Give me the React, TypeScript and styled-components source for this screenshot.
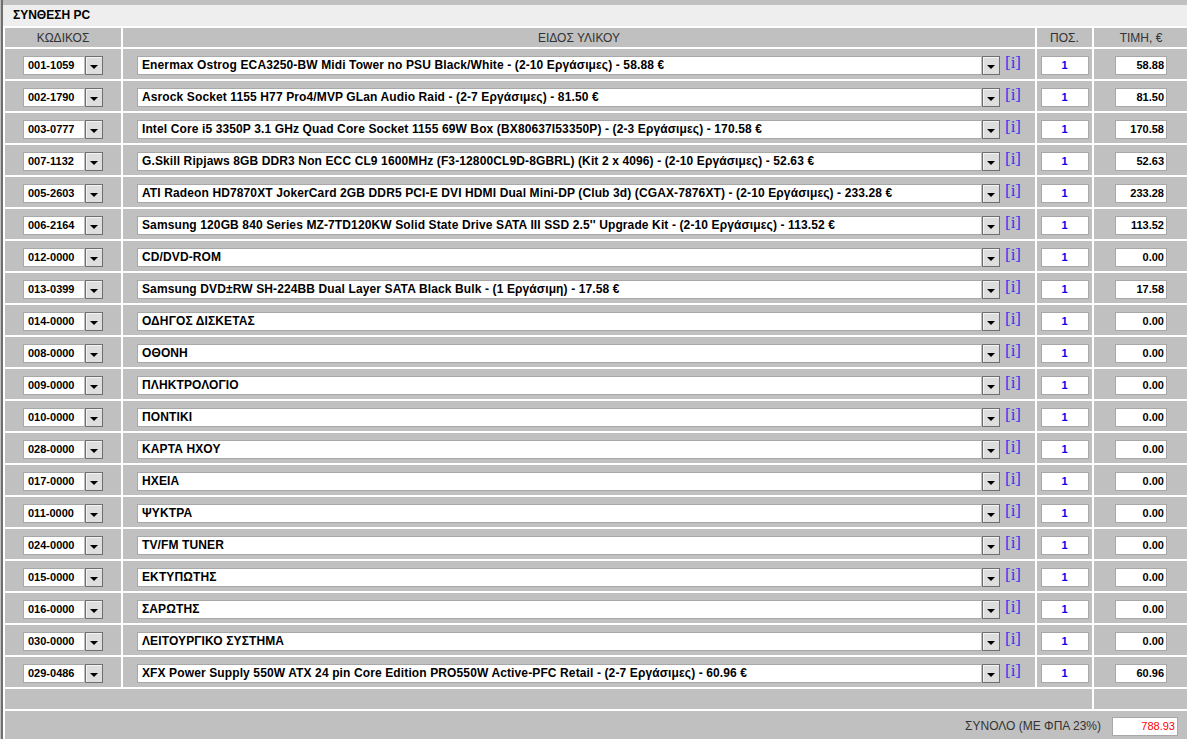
import React from "react";
import styled, { createGlobalStyle } from "styled-components";

const GlobalStyle = createGlobalStyle`
  html, body {
    margin: 0;
    padding: 0;
    background: #c0c0c0;
    overflow: hidden;
  }
  body {
    font-family: "Liberation Sans", Arial, sans-serif;
    font-size: 11px;
    color: #000;
  }
`;

const Page = styled.div`
  margin-left: 1px;
  border-left: 2px solid #6e6e6e;
  padding-top: 5px;
  width: 1184px;
  height: 734px;
  overflow: hidden;
`;

const TitleBar = styled.div`
  height: 21px;
  line-height: 21px;
  background: #eeeeee;
  padding-left: 10px;
  font-size: 12px;
  font-weight: bold;
`;

const Grid = styled.table`
  border-collapse: separate;
  border-spacing: 2px;
  background: #fff;
  table-layout: fixed;
  width: 1187px;
`;

const HeadCell = styled.th`
  background: #c0c0c0;
  height: 19px;
  padding: 0;
  font-size: 12px;
  font-weight: normal;
  color: #333;
  text-align: center;
  vertical-align: middle;
`;

const Cell = styled.td<{ $h?: number }>`
  background: #c0c0c0;
  height: ${(p) => p.$h ?? 30}px;
  padding: 7px 0 0;
  box-sizing: border-box;
  text-align: center;
  vertical-align: top;
  white-space: nowrap;
`;

const FooterCell = styled.td`
  background: #c0c0c0;
  height: 30px;
  padding: 6px 10px 0 0;
  box-sizing: border-box;
  text-align: right;
  vertical-align: top;
`;

const Combo = styled.div<{ $w: number }>`
  display: inline-flex;
  align-items: center;
  gap: 1px;
  width: ${(p) => p.$w}px;
  height: 19px;
  vertical-align: top;
  text-align: left;
`;

const ComboField = styled.span<{ $size: number }>`
  flex: 1;
  height: 19px;
  line-height: 17px;
  box-sizing: border-box;
  background: #fff;
  border: 1px solid #a8a8a8;
  border-right: none;
  padding-left: 4px;
  font-size: ${(p) => p.$size}px;
  letter-spacing: ${(p) => (p.$size > 11 ? "0.12px" : "0")};
  font-weight: bold;
  overflow: hidden;
  white-space: nowrap;
`;

const ComboButton = styled.span`
  width: 18px;
  height: 19px;
  box-sizing: border-box;
  border: 1px solid #6f6f6f;
  box-shadow: inset 1px 1px 0 #f4f4f4;
  background: #dedede;
  display: flex;
  align-items: center;
  justify-content: center;
  padding-top: 2px;

  &::after {
    content: "";
    border-left: 4px solid transparent;
    border-right: 4px solid transparent;
    border-top: 4px solid #000;
  }
`;

const InfoLink = styled.a`
  display: inline-block;
  margin-left: 5px;
  font-family: "Liberation Serif", "Times New Roman", serif;
  font-size: 17px;
  line-height: 15px;
  color: #3434f0;
  text-decoration: none;
  vertical-align: top;
  margin-top: -1px;
`;

const Field = styled.span<{ $w: number; $align: string; $color: string; $bold?: boolean }>`
  display: inline-block;
  width: ${(p) => p.$w}px;
  height: 19px;
  line-height: 17px;
  box-sizing: border-box;
  background: #fff;
  border: 1px solid #a8a8a8;
  text-align: ${(p) => p.$align};
  color: ${(p) => p.$color};
  font-weight: ${(p) => (p.$bold ? "bold" : "normal")};
  padding: 0 2px;
  vertical-align: top;
`;

const TotalLabel = styled.span`
  display: inline-block;
  color: #333;
  font-size: 12px;
  line-height: 19px;
  margin-right: 11px;
  vertical-align: top;
`;

type Row = { code: string; name: string; price: string };

const rows: Row[] = [
  { code: "001-1059", name: "Enermax Ostrog ECA3250-BW Midi Tower no PSU Black/White - (2-10 Εργάσιμες) - 58.88 €", price: "58.88" },
  { code: "002-1790", name: "Asrock Socket 1155 H77 Pro4/MVP GLan Audio Raid - (2-7 Εργάσιμες) - 81.50 €", price: "81.50" },
  { code: "003-0777", name: "Intel Core i5 3350P 3.1 GHz Quad Core Socket 1155 69W Box (BX80637I53350P) - (2-3 Εργάσιμες) - 170.58 €", price: "170.58" },
  { code: "007-1132", name: "G.Skill Ripjaws 8GB DDR3 Non ECC CL9 1600MHz (F3-12800CL9D-8GBRL) (Kit 2 x 4096) - (2-10 Εργάσιμες) - 52.63 €", price: "52.63" },
  { code: "005-2603", name: "ATI Radeon HD7870XT JokerCard 2GB DDR5 PCI-E DVI HDMI Dual Mini-DP (Club 3d) (CGAX-7876XT) - (2-10 Εργάσιμες) - 233.28 €", price: "233.28" },
  { code: "006-2164", name: "Samsung 120GB 840 Series MZ-7TD120KW Solid State Drive SATA III SSD 2.5'' Upgrade Kit - (2-10 Εργάσιμες) - 113.52 €", price: "113.52" },
  { code: "012-0000", name: "CD/DVD-ROM", price: "0.00" },
  { code: "013-0399", name: "Samsung DVD±RW SH-224BB Dual Layer SATA Black Bulk - (1 Εργάσιμη) - 17.58 €", price: "17.58" },
  { code: "014-0000", name: "ΟΔΗΓΟΣ ΔΙΣΚΕΤΑΣ", price: "0.00" },
  { code: "008-0000", name: "ΟΘΟΝΗ", price: "0.00" },
  { code: "009-0000", name: "ΠΛΗΚΤΡΟΛΟΓΙΟ", price: "0.00" },
  { code: "010-0000", name: "ΠΟΝΤΙΚΙ", price: "0.00" },
  { code: "028-0000", name: "ΚΑΡΤΑ ΗΧΟΥ", price: "0.00" },
  { code: "017-0000", name: "ΗΧΕΙΑ", price: "0.00" },
  { code: "011-0000", name: "ΨΥΚΤΡΑ", price: "0.00" },
  { code: "024-0000", name: "TV/FM TUNER", price: "0.00" },
  { code: "015-0000", name: "ΕΚΤΥΠΩΤΗΣ", price: "0.00" },
  { code: "016-0000", name: "ΣΑΡΩΤΗΣ", price: "0.00" },
  { code: "030-0000", name: "ΛΕΙΤΟΥΡΓΙΚΟ ΣΥΣΤΗΜΑ", price: "0.00" },
  { code: "029-0486", name: "XFX Power Supply 550W ATX 24 pin Core Edition PRO550W Active-PFC Retail - (2-7 Εργάσιμες) - 60.96 €", price: "60.96" },
];

export default function App() {
  return (
    <Page>
      <GlobalStyle />
      <TitleBar>ΣΥΝΘΕΣΗ PC</TitleBar>
      <Grid>
        <colgroup>
          <col style={{ width: 116 }} />
          <col style={{ width: 912 }} />
          <col style={{ width: 55 }} />
          <col style={{ width: 94 }} />
        </colgroup>
        <thead>
          <tr>
            <HeadCell>ΚΩΔΙΚΟΣ</HeadCell>
            <HeadCell>ΕΙΔΟΣ ΥΛΙΚΟΥ</HeadCell>
            <HeadCell>ΠΟΣ.</HeadCell>
            <HeadCell>ΤΙΜΗ, €</HeadCell>
          </tr>
        </thead>
        <tbody>
          {rows.map((r) => (
            <tr key={r.code}>
              <Cell>
                <Combo $w={80}>
                  <ComboField $size={11}>{r.code}</ComboField>
                  <ComboButton />
                </Combo>
              </Cell>
              <Cell>
                <Combo $w={863}>
                  <ComboField $size={12}>{r.name}</ComboField>
                  <ComboButton />
                </Combo>
                <InfoLink href="#">[i]</InfoLink>
              </Cell>
              <Cell>
                <Field $w={48} $align="center" $color="#0000ee" $bold>1</Field>
              </Cell>
              <Cell>
                <Field $w={52} $align="right" $color="#000" $bold>{r.price}</Field>
              </Cell>
            </tr>
          ))}
          <tr>
            <Cell colSpan={3} $h={20} />
            <Cell $h={20} />
          </tr>
          <tr>
            <FooterCell colSpan={4}>
              <TotalLabel>ΣΥΝΟΛΟ (ΜΕ ΦΠΑ 23%)</TotalLabel>
              <Field $w={66} $align="right" $color="#ff0000">788.93</Field>
            </FooterCell>
          </tr>
        </tbody>
      </Grid>
    </Page>
  );
}
